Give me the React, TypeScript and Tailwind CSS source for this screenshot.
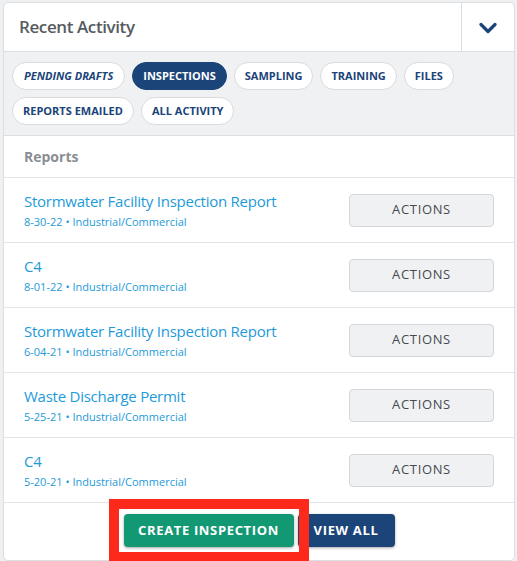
import { useState } from 'react'

type Report = {
  title: string
  date: string
  category: string
}

const TABS = [
  'Pending Drafts',
  'Inspections',
  'Sampling',
  'Training',
  'Files',
  'Reports Emailed',
  'All Activity',
]

const REPORTS: Report[] = [
  { title: 'Stormwater Facility Inspection Report', date: '8-30-22', category: 'Industrial/Commercial' },
  { title: 'C4', date: '8-01-22', category: 'Industrial/Commercial' },
  { title: 'Stormwater Facility Inspection Report', date: '6-04-21', category: 'Industrial/Commercial' },
  { title: 'Waste Discharge Permit', date: '5-25-21', category: 'Industrial/Commercial' },
  { title: 'C4', date: '5-20-21', category: 'Industrial/Commercial' },
]

function ChevronDown() {
  return (
    <svg width="18" height="12" viewBox="0 0 18 12" fill="none">
      <path d="M2 2.5l7 7 7-7" stroke="#1b4479" strokeWidth="3.2" strokeLinecap="round" strokeLinejoin="round" />
    </svg>
  )
}

function ReportRow({ report }: { report: Report }) {
  return (
    <div className="flex h-[65px] items-center justify-between border-b border-[#e2e4e6] pl-5 pr-5">
      <div className="flex flex-col">
        <a href="#" className="text-[15px] leading-[18px] tracking-[-0.25px] text-[#1d9ad9]">
          {report.title}
        </a>
        <span className="mt-[5px] text-[11px] leading-[14px] text-[#1d9ad9]">
          {report.date} • {report.category}
        </span>
      </div>
      <button className="h-[33px] w-[145px] rounded-[4px] border border-[#d3d6da] bg-[#f0f1f3] text-[13px] tracking-[0.05em] text-[#464a4f]">
        ACTIONS
      </button>
    </div>
  )
}

export default function App() {
  const [active, setActive] = useState('Inspections')

  return (
    <div
      className="min-h-screen bg-[#eef0f2] pl-[3px] pr-[2px] pt-[2px]"
      style={{ fontFamily: '"Open Sans", "Liberation Sans", sans-serif' }}
    >
      <div className="rounded-[5px] border border-[#dcdfe2] bg-white">
        <div className="flex h-[49px] border-b border-[#dcdfe2]">
          <h2 className="flex flex-1 items-center pl-[15px] text-[17px] font-semibold tracking-[-0.4px] text-[#565b61]">
            Recent Activity
          </h2>
          <button className="flex w-[53px] items-center justify-center border-l border-[#dcdfe2] pt-[2px]">
            <ChevronDown />
          </button>
        </div>

        <div className="flex flex-wrap gap-[7px] border-b border-[#dcdfe2] bg-[#f0f1f3] px-2 py-[10px]">
          {TABS.map((tab) => {
            const selected = tab === active
            return (
              <button
                key={tab}
                onClick={() => setActive(tab)}
                className={
                  selected
                    ? 'h-[28px] rounded-full border border-[#1b4479] bg-[#1b4479] px-[10px] text-[11px] font-bold uppercase text-white'
                    : tab === 'Pending Drafts'
                      ? 'h-[28px] rounded-full border border-[#d8dbdf] bg-white px-[11px] text-[11px] font-bold italic uppercase text-[#1b4479]'
                      : 'h-[28px] rounded-full border border-[#d8dbdf] bg-white px-[10px] text-[11px] font-bold uppercase text-[#1b4479]'
                }
              >
                {tab}
              </button>
            )
          })}
        </div>

        <div className="flex h-[42px] items-center border-b border-[#e2e4e6] pl-5 text-[14px] font-bold text-[#8a8e93]">
          Reports
        </div>

        {REPORTS.map((report, i) => (
          <ReportRow key={i} report={report} />
        ))}

        <div className="flex justify-center gap-[4px] pb-[13px] pt-[11px]">
          <span className="relative">
            <button className="h-[33px] w-[170px] rounded-[4px] bg-[#139874] text-[13px] font-bold tracking-[0.05em] text-white shadow-[0_1px_3px_rgba(0,0,0,0.35)]">
              CREATE INSPECTION
            </button>
            <span className="pointer-events-none absolute -inset-[15px] border-[10px] border-[#fd2a1c]" />
          </span>
          <button className="h-[33px] w-[97px] rounded-[4px] bg-[#1b4479] text-[13px] font-bold tracking-[0.05em] text-white shadow-[0_1px_3px_rgba(0,0,0,0.35)]">
            VIEW ALL
          </button>
        </div>
      </div>
    </div>
  )
}
